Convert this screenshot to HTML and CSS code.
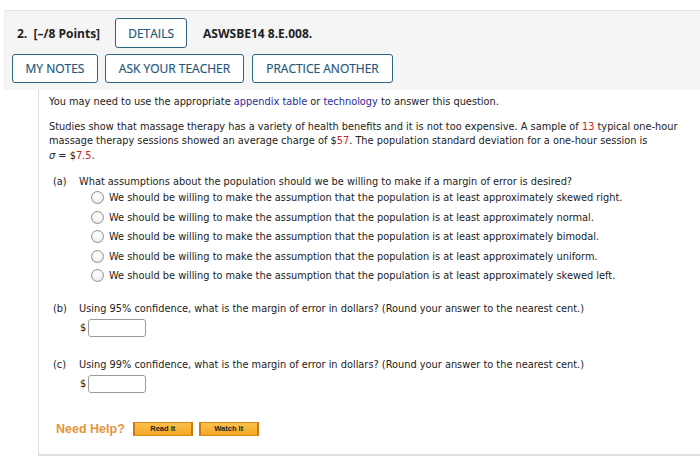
FILE: index.html
```html
<!DOCTYPE html>
<html>
<head>
<meta charset="utf-8">
<link rel="stylesheet" href="styles.css">
</head>
<body>
<div class="question">
  <div class="qhead">
    <div class="row1">
      <span class="num">2.&nbsp; [–/8 Points]</span>
      <span class="btn btn-details">DETAILS</span>
      <span class="code">ASWSBE14 8.E.008.</span>
    </div>
    <div class="row2">
      <span class="btn">MY NOTES</span>
      <span class="btn">ASK YOUR TEACHER</span>
      <span class="btn">PRACTICE ANOTHER</span>
    </div>
  </div>
  <div class="qbody">
    <p class="intro">You may need to use the appropriate <span class="link">appendix table</span> or <span class="link">technology</span> to answer this question.</p>
    <p class="intro">Studies show that massage therapy has a variety of health benefits and it is not too expensive. A sample of <span class="red">13</span> typical one-hour massage therapy sessions showed an average charge of $<span class="red">57</span>. The population standard deviation for a one-hour session is<br><span class="sigma">σ</span> = $<span class="red">7.5</span>.</p>

    <div class="part part-a">
      <div class="qline"><span class="lbl">(a)</span><span>What assumptions about the population should we be willing to make if a margin of error is desired?</span></div>
      <ul class="options">
        <li><span class="radio"></span>We should be willing to make the assumption that the population is at least approximately skewed right.</li>
        <li><span class="radio"></span>We should be willing to make the assumption that the population is at least approximately normal.</li>
        <li><span class="radio"></span>We should be willing to make the assumption that the population is at least approximately bimodal.</li>
        <li><span class="radio"></span>We should be willing to make the assumption that the population is at least approximately uniform.</li>
        <li><span class="radio"></span>We should be willing to make the assumption that the population is at least approximately skewed left.</li>
      </ul>
    </div>

    <div class="part part-b">
      <div class="qline"><span class="lbl">(b)</span><span>Using 95% confidence, what is the margin of error in dollars? (Round your answer to the nearest cent.)</span></div>
      <div class="answer"><span class="dollar">$</span><span class="input"></span></div>
    </div>

    <div class="part part-c">
      <div class="qline"><span class="lbl">(c)</span><span>Using 99% confidence, what is the margin of error in dollars? (Round your answer to the nearest cent.)</span></div>
      <div class="answer"><span class="dollar">$</span><span class="input"></span></div>
    </div>

    <div class="help">
      <span class="need">Need Help?</span>
      <span class="hbtn">Read It</span>
      <span class="hbtn">Watch It</span>
    </div>
  </div>
</div>
</body>
</html>
```

FILE: styles.css
```css
html, body {
  margin: 0;
  padding: 0;
  background: #ffffff;
}
body {
  width: 700px;
  height: 458px;
  overflow: hidden;
}
.question {
  padding-top: 10px;
  padding-left: 4px;
}
.qhead {
  background: #f5f5f5;
  border-top: 1px solid #e6e6e6;
  border-left: 1px solid #eeeeee;
  padding: 7px 0 7px 7px;
  font-family: "Open Sans", "Liberation Sans", sans-serif;
}
.row1 {
  display: flex;
  align-items: center;
  height: 30px;
}
.num {
  font-weight: 700;
  font-size: 12px;
  color: #222;
  margin-left: 5px;
  margin-right: 15px;
}
.code {
  font-weight: 700;
  font-size: 12px;
  color: #222;
  margin-left: 16px;
}
.row2 {
  display: flex;
  gap: 7px;
  margin-top: 6px;
}
.btn {
  display: inline-flex;
  align-items: center;
  justify-content: center;
  box-sizing: border-box;
  height: 30px;
  border: 1.5px solid #2d6483;
  border-radius: 3px;
  background: #fff;
  color: #22567a;
  font-size: 12px;
  font-family: "Open Sans", "Liberation Sans", sans-serif;
  -webkit-text-stroke: 0.2px #22567a;
}
.btn-details {
  width: 72px;
}
.row2 .btn {
  height: 29px;
}
.row2 .btn:nth-child(1) { width: 86px; }
.row2 .btn:nth-child(2) { width: 139px; }
.row2 .btn:nth-child(3) { width: 141px; margin-left: 1px; }
.qbody {
  margin-left: 34px;
  border-left: 1px solid #dcdcdc;
  border-bottom: 2px solid #e2e2e2;
  background: #fff;
  padding: 5px 0 0 10px;
  height: 366px;
  box-sizing: border-box;
  font-family: "DejaVu Sans", Verdana, sans-serif;
  font-size: 9.8px;
  color: #222;
}
.intro {
  margin: 0 0 10px 0;
  line-height: 14.5px;
  padding-right: 14px;
}
.link { color: #2a2a9c; }
.red { color: #cc2222; }
.sigma { font-style: italic; line-height: 1; }
.part {
  padding-left: 4px;
}
.part-a { margin-top: 12px; }
.qline {
  display: flex;
  line-height: 14px;
}
.lbl {
  width: 26px;
  flex: none;
}
.options {
  list-style: none;
  margin: -1px 0 0 38px;
  padding: 0;
}
.options li {
  display: flex;
  align-items: center;
  height: 19.5px;
}
.radio {
  width: 11px;
  height: 11px;
  border-radius: 50%;
  border: 1px solid #8f8f8f;
  background: radial-gradient(circle at 50% 35%, #ffffff 0%, #f4f4f4 55%, #dcdcdc 100%);
  margin-right: 5px;
  flex: none;
}
.part-b { margin-top: 16px; }
.part-c { margin-top: 21px; }
.answer {
  display: flex;
  align-items: center;
  margin-top: 3px;
  margin-left: 27px;
}
.dollar {
  width: 8px;
}
.input {
  display: inline-block;
  width: 56px;
  height: 16px;
  border: 1px solid #9a9a9a;
  border-radius: 3px;
  background: #fff;
}
.help {
  display: flex;
  align-items: center;
  margin-top: 29px;
  margin-left: 7px;
}
.need {
  font-family: "Liberation Sans", Arial, sans-serif;
  font-weight: 700;
  font-size: 12.5px;
  color: #e8943a;
  margin-right: 8px;
}
.hbtn {
  display: inline-flex;
  align-items: center;
  justify-content: center;
  box-sizing: border-box;
  width: 60px;
  height: 14px;
  margin-right: 6px;
  background: linear-gradient(#fcc24e, #f5a623);
  border: 1px solid #d98a1e;
  border-left: 2px solid #c97a14;
  border-right: 2px solid #c97a14;
  font-family: "Liberation Sans", Arial, sans-serif;
  font-weight: 700;
  font-size: 7.5px;
  color: #222;
}
```
